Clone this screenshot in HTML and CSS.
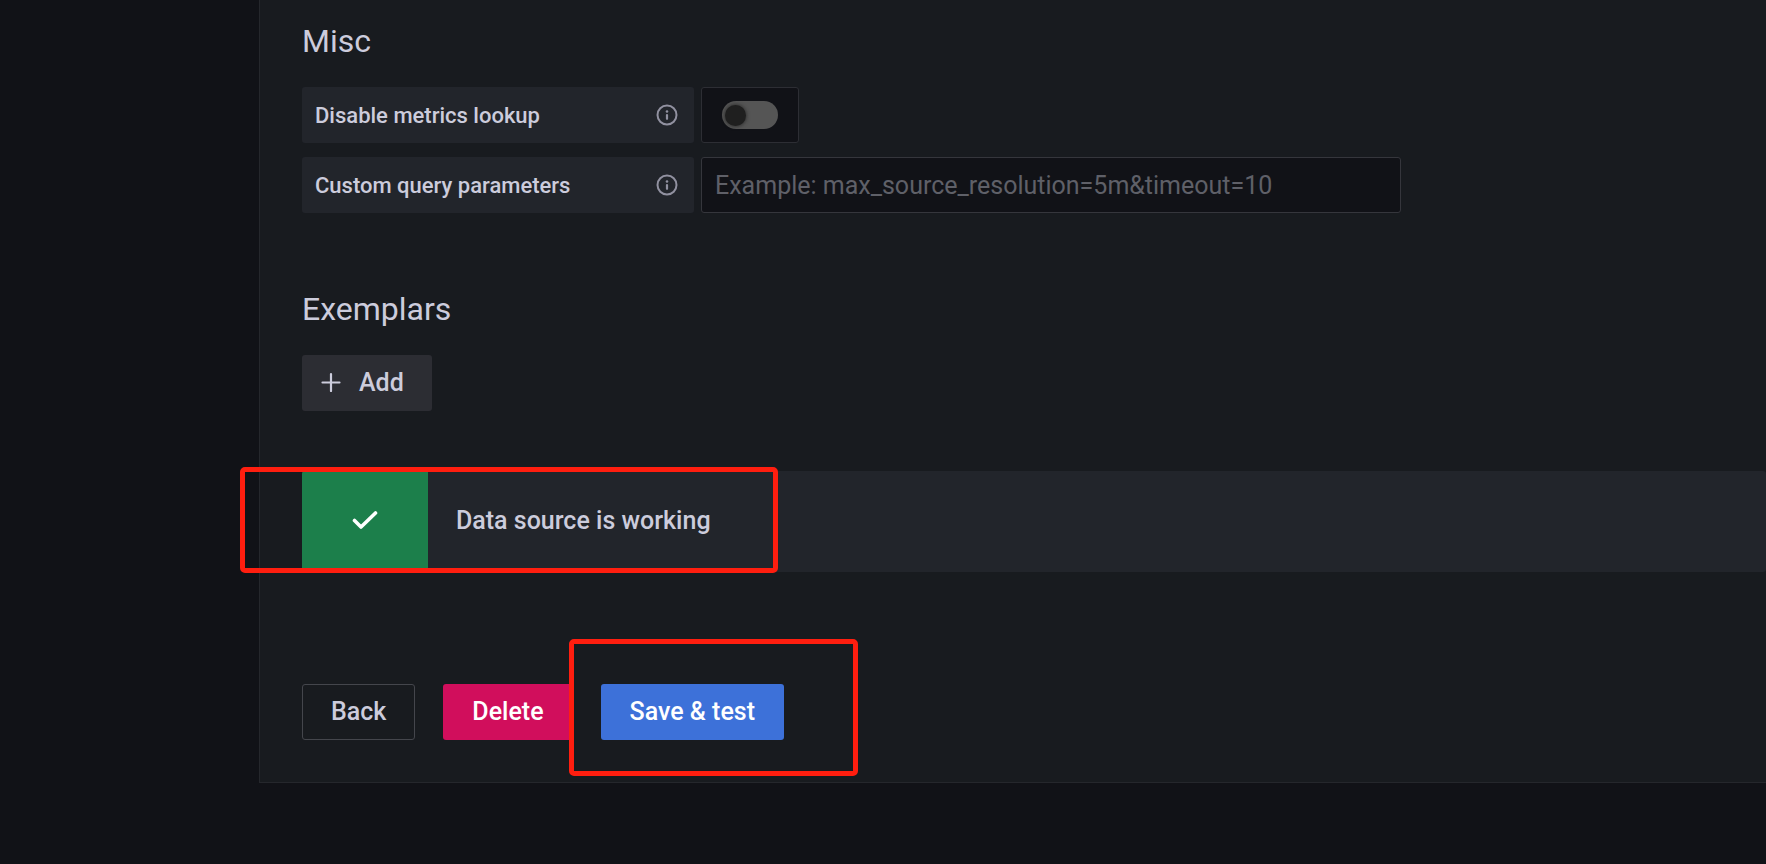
FILE: index.html
```html
<!DOCTYPE html>
<html lang="en">
<head>
<meta charset="utf-8">
<title>Data source settings</title>
<link rel="stylesheet" href="styles.css">
</head>
<body>
<main class="panel">
  <section class="section">
    <h3 class="heading">Misc</h3>
    <div class="fields">
      <div class="field">
        <div class="field-label">
          <label for="lookup">Disable metrics lookup</label>
          <svg class="info" viewBox="0 0 22 22" aria-hidden="true"><circle cx="11" cy="11" r="9.500" fill="none" stroke="currentColor" stroke-width="2"/><circle cx="11" cy="7.500" r="1.300" fill="currentColor"/><path d="M11 11v3.800" fill="none" stroke="currentColor" stroke-width="2.200" stroke-linecap="round"/></svg>
        </div>
        <div class="switch-box"><input class="switch" type="checkbox" id="lookup"></div>
      </div>
      <div class="field">
        <div class="field-label">
          <label for="params">Custom query parameters</label>
          <svg class="info" viewBox="0 0 22 22" aria-hidden="true"><circle cx="11" cy="11" r="9.500" fill="none" stroke="currentColor" stroke-width="2"/><circle cx="11" cy="7.500" r="1.300" fill="currentColor"/><path d="M11 11v3.800" fill="none" stroke="currentColor" stroke-width="2.200" stroke-linecap="round"/></svg>
        </div>
        <input class="text-input" type="text" id="params" placeholder="Example: max_source_resolution=5m&amp;timeout=10">
      </div>
    </div>
  </section>
  <section class="section">
    <h3 class="heading">Exemplars</h3>
    <button class="button button-add" type="button">
      <svg class="plus" viewBox="0 0 20 20" aria-hidden="true"><path d="M10 2v17M1.500 10.500h17" fill="none" stroke="currentColor" stroke-width="2.200" stroke-linecap="round"/></svg>
      Add
    </button>
  </section>
  <div class="alert" role="status">
    <div class="alert-icon">
      <svg class="check" viewBox="0 0 26 20" aria-hidden="true"><path d="M2.500 9.500l6.500 6.500L23.500 2" fill="none" stroke="currentColor" stroke-width="3.600" stroke-linecap="round" stroke-linejoin="round"/></svg>
    </div>
    <div class="alert-text">Data source is working</div>
    <span class="mark mark-alert"></span>
  </div>
  <div class="actions">
    <button class="button button-outline" type="button">Back</button>
    <button class="button button-danger" type="button">Delete</button>
    <div class="save">
      <button class="button button-primary" type="submit">Save &amp; test</button>
      <span class="mark mark-save"></span>
    </div>
  </div>
</main>
</body>
</html>
```
FILE: styles.css
```css
* {
  box-sizing: border-box;
}

body {
  margin: 0;
  background: #111217;
  color: #ccccdc;
  font-family: Roboto, "Liberation Sans", sans-serif;
  font-size: 25px;
  overflow-x: hidden;
}

.panel {
  margin-left: 259px;
  padding: 21px 0 42px 42px;
  background: #181b1f;
  border-left: 1px solid #25272c;
  border-bottom: 1px solid #25272c;
}

.section {
  margin-bottom: 76px;
}

.section + .section {
  margin-bottom: 60px;
}

.heading {
  margin: 0 0 26px;
  font-size: 32px;
  font-weight: 400;
  line-height: 40px;
}

.fields {
  display: flex;
  flex-direction: column;
  gap: 14px;
}

.field {
  display: flex;
  gap: 7px;
  height: 56px;
}

.field-label {
  display: flex;
  align-items: center;
  justify-content: space-between;
  width: 392px;
  padding: 0 16px 0 13px;
  border-radius: 3px;
  background: #22252b;
  font-size: 22px;
  font-weight: 500;
}

.info {
  width: 22px;
  height: 22px;
  color: #9191a0;
}

.switch-box {
  display: flex;
  align-items: center;
  padding: 0 20px;
  border: 1px solid #2d2e34;
  border-radius: 3px;
  background: #111217;
}

.switch {
  display: flex;
  align-items: center;
  appearance: none;
  width: 56px;
  height: 28px;
  margin: 0;
  padding: 0 3px;
  border-radius: 14px;
  background: #555;
}

.switch::before {
  content: "";
  width: 21px;
  height: 21px;
  border-radius: 50%;
  background: #1f1f1f;
  box-shadow: 0 0 4px #1f1f1f;
}

.text-input {
  width: 700px;
  padding: 0 13px;
  border: 1px solid #35363c;
  border-radius: 3px;
  background: #111217;
  color: #ccccdc;
  font: inherit;
}

.text-input::placeholder {
  color: #5f6068;
}

.button {
  display: flex;
  align-items: center;
  height: 56px;
  padding: 0 28px 2px;
  border: 1px solid transparent;
  border-radius: 3px;
  color: #fff;
  font: inherit;
  font-weight: 500;
}

.button-add {
  gap: 18px;
  padding: 0 27px 2px 18px;
  background: #2c2d33;
  color: #ccccdc;
}

.plus {
  width: 20px;
  height: 20px;
}

.button-outline {
  background: transparent;
  border-color: #44464c;
  color: #ccccdc;
}

.button-danger {
  background: #d10e5c;
}

.button-primary {
  background: #3d71d9;
}

.alert {
  position: relative;
  display: flex;
  height: 101px;
  border-radius: 3px;
  background: #22252b;
}

.alert-icon {
  display: flex;
  align-items: center;
  justify-content: center;
  width: 126px;
  padding-bottom: 2px;
  border-radius: 3px 0 0 3px;
  background: #1c7f4b;
  color: #fff;
}

.check {
  width: 26px;
  height: 20px;
}

.alert-text {
  display: flex;
  align-items: center;
  padding: 0 0 2px 28px;
  font-weight: 500;
}

.actions {
  display: flex;
  gap: 28px;
  margin-top: 112px;
}

.save {
  position: relative;
}

.mark {
  position: absolute;
  border: 5px solid #ff1e0f;
  border-radius: 5px;
  pointer-events: none;
}

.mark-alert {
  left: -62px;
  top: -4px;
  width: 538px;
  height: 106px;
}

.mark-save {
  left: -32px;
  top: -45px;
  width: 289px;
  height: 137px;
}
```
